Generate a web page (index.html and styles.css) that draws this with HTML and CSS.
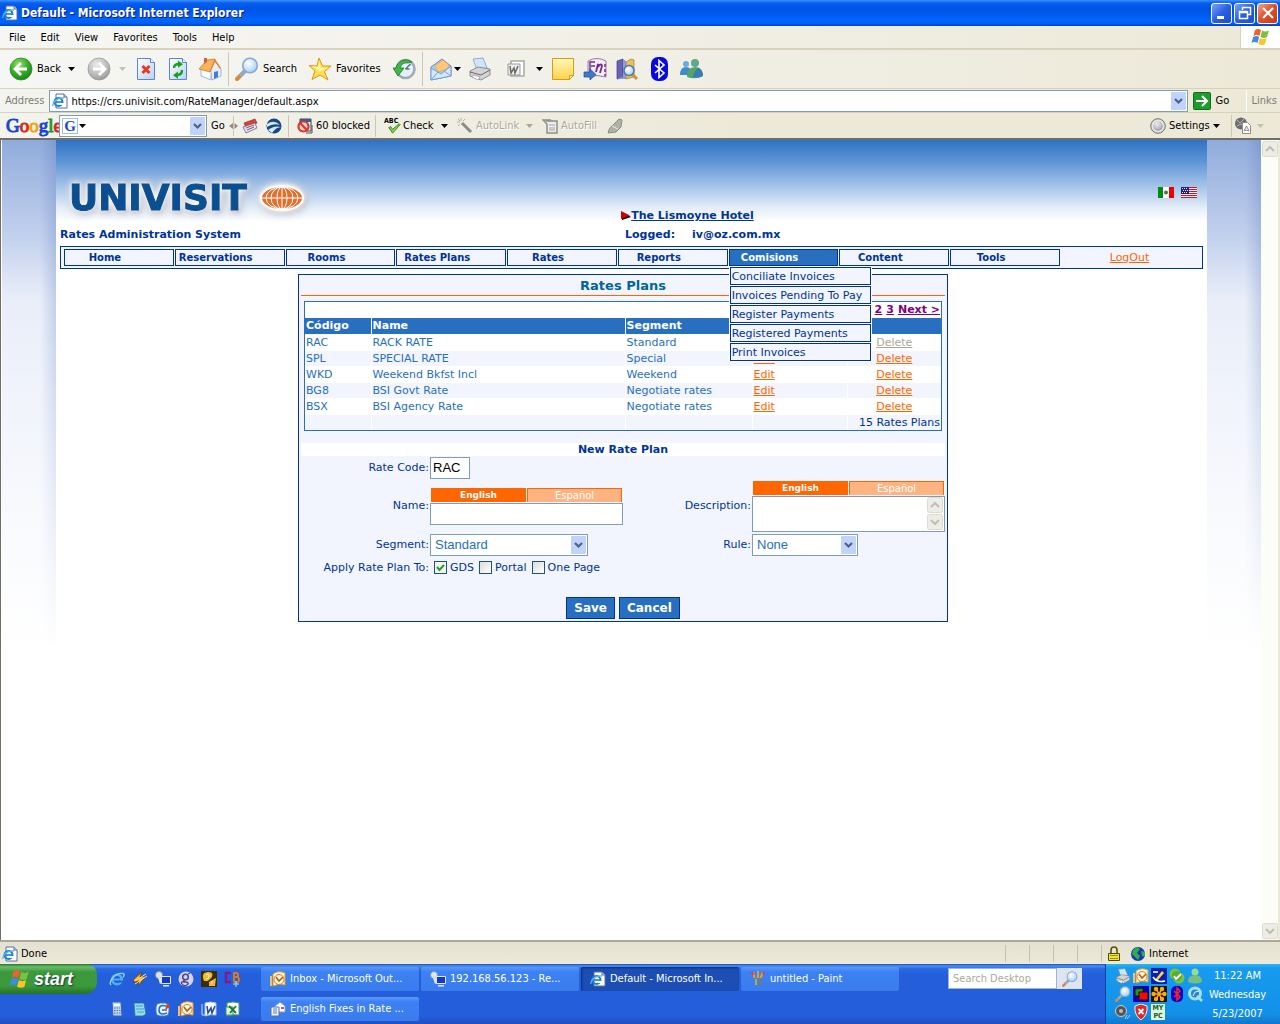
FILE: index.html
```html
<!DOCTYPE html>
<html lang="en">
<head>
<meta charset="utf-8">
<title>Default - Microsoft Internet Explorer</title>
<link rel="stylesheet" href="styles.css">
</head>
<body>
<svg class="defs" width="0" height="0" aria-hidden="true">
  <defs>
    <radialGradient id="gGreen" cx=".4" cy=".3" r=".8"><stop offset="0" stop-color="#9be36b"/><stop offset=".5" stop-color="#38ae27"/><stop offset="1" stop-color="#127a16"/></radialGradient>
    <radialGradient id="gGray" cx=".4" cy=".3" r=".8"><stop offset="0" stop-color="#ececec"/><stop offset=".6" stop-color="#b9b9b9"/><stop offset="1" stop-color="#8e8e8e"/></radialGradient>
    <linearGradient id="gPage" x1="0" y1="0" x2="1" y2="1"><stop offset="0" stop-color="#fff"/><stop offset="1" stop-color="#b9d0fa"/></linearGradient>
    <radialGradient id="gLens" cx=".4" cy=".35" r=".7"><stop offset="0" stop-color="#fff"/><stop offset="1" stop-color="#a5cdf5"/></radialGradient>
    <linearGradient id="gNote" x1="0" y1="0" x2="0" y2="1"><stop offset="0" stop-color="#fff8b8"/><stop offset="1" stop-color="#ffd24a"/></linearGradient>
  </defs>
  <symbol id="ie" viewBox="0 0 16 16"><path d="M4 1h8l3 3v11H4z" fill="#fff" stroke="#5a6f9a"/><path d="M12 1v3h3" fill="#cfdcf5" stroke="#5a6f9a"/><circle cx="6.500" cy="9" r="4" fill="none" stroke="#1c7fd6" stroke-width="2"/><path d="M3 9h7" stroke="#1c7fd6" stroke-width="1.600"/><path d="M8 10h4v2H8z" fill="#fff"/><path d="M1 13C0 9 6 4 12 5" fill="none" stroke="#56b4f0" stroke-width="1.300"/></symbol>
  <symbol id="ieblue" viewBox="0 0 16 16"><circle cx="8" cy="8.500" r="4.800" fill="none" stroke="#4fb0f5" stroke-width="2.600"/><path d="M4 8.500h9" stroke="#4fb0f5" stroke-width="2"/><path d="M10 9.600h5v2h-5z" fill="#245edb"/><path d="M2 14C-1 10 7 1 14 2.500c2 .5 1 2.500 0 4" fill="none" stroke="#8fd3ff" stroke-width="1.300"/></symbol>
  <symbol id="flag" viewBox="0 0 20 18"><path d="M4 2q3-2 6 0L8.500 8q-3-2-6 0z" fill="#f0602a"/><path d="M11 2.500q3 2 7 0L16 9q-3 2-6.500 0z" fill="#7ac143"/><path d="M2.200 9q3-2 6 0L6.500 15q-3-2-6 0z" fill="#3f8be8"/><path d="M9 10q3 2 6.600 0L14 16q-3 2-6.700 0z" fill="#fbc42c"/></symbol>
  <symbol id="back" viewBox="0 0 24 24"><circle cx="12" cy="12" r="11" fill="url(#gGreen)" stroke="#36853a" stroke-width=".8"/><path d="M12 6l-6 6 6 6M7 12h11" fill="none" stroke="#fff" stroke-width="2.800"/></symbol>
  <symbol id="fwd" viewBox="0 0 24 24"><circle cx="12" cy="12" r="11" fill="url(#gGray)" stroke="#9a9a9a" stroke-width=".8"/><path d="M12 6l6 6-6 6M17 12H6" fill="none" stroke="#fff" stroke-width="2.800"/></symbol>
  <symbol id="stop" viewBox="0 0 24 24"><path d="M3.500 1.500h13l4 4v17h-17z" fill="url(#gPage)" stroke="#5b86d8"/><path d="M16.500 1.500v4h4" fill="#fff" stroke="#5b86d8"/><path d="M8.500 9l7 7m0-7l-7 7" stroke="#e8381c" stroke-width="3"/></symbol>
  <symbol id="refresh" viewBox="0 0 24 24"><path d="M3.500 1.500h13l4 4v17h-17z" fill="url(#gPage)" stroke="#5b86d8"/><path d="M16.500 1.500v4h4" fill="#fff" stroke="#5b86d8"/><path d="M8 11q0-4 5-4M16 13q0 5-5 5" fill="none" stroke="#18a018" stroke-width="2.400"/><path d="M12 3.500l5 3.700-5 3.600zM12 14.500l-5 3.700 5 3.500z" fill="#18a018"/></symbol>
  <symbol id="home" viewBox="0 0 24 24"><path d="M12 12l5-8 6 8v7l-9 4z" fill="#e4edfc" stroke="#8fa6d0" stroke-width=".8"/><path d="M3 12l10 2v9l-10-4z" fill="#fafcff" stroke="#8fa6d0" stroke-width=".8"/><path d="M1 12L9 3l8-1-5 13z" fill="#f7b45c" stroke="#cf7a22" stroke-width=".8"/><path d="M17 2l6 9-1 1-5-7-4 9-1 1z" fill="#de8634"/><path d="M16 15l4-1v6l-4 2z" fill="#477bd0"/><path d="M6 1h3v4l-3 2z" fill="#d95d3a"/></symbol>
  <symbol id="search" viewBox="0 0 24 24"><path d="M10 14l-8 8" stroke="#d98a3a" stroke-width="4" stroke-linecap="round"/><path d="M10 14l-5 5" stroke="#7db0e8" stroke-width="3"/><circle cx="15" cy="8.500" r="7.300" fill="url(#gLens)" stroke="#86a9dc" stroke-width="1.600"/></symbol>
  <symbol id="star" viewBox="0 0 24 24"><path d="M11 1l3.500 8H23l-6.500 5.500L20 23l-8-5-8 4.500 3-8.500L1 8.500l8 .5z" fill="#ffdf4d" stroke="#d89a14"/><path d="M11 4l2 7 6 0-6 3-1 1-5-4-3-2 6 1z" fill="#fff3a3"/></symbol>
  <symbol id="history" viewBox="0 0 24 24"><circle cx="13.500" cy="12" r="9" fill="#e6f0fa" stroke="#a1a9b2" stroke-width="2.500"/><path d="M13.500 12l5-5M13.500 12h4" stroke="#54718e" stroke-width="1.500"/><path d="M20 5A10 10 0 004 11H1l5 8 6-8H8q2-6 8-5z" fill="#44b545" stroke="#1b7e22" stroke-width=".8"/></symbol>
  <symbol id="mail" viewBox="0 0 24 24"><path d="M2 10L13 2l9 7v10L2 23z" fill="#a5ccf8" stroke="#8182b8"/><path d="M6 9l8-6 6 5-2 4-9 3z" fill="#ffc878" stroke="#e09b3d" stroke-width=".6"/><path d="M2 11l10 6 10-8v10L2 23z" fill="#cdecff" stroke="#7d9bd5"/><path d="M2 23l7-8m13 4l-7-5" stroke="#7d9bd5"/></symbol>
  <symbol id="print" viewBox="0 0 24 24"><path d="M5 2l10-1 4 10-10 2z" fill="#cfe4ff" stroke="#7f9cc7" stroke-width=".8"/><path d="M2 14l8-4 12 2v6l-9 5-11-4z" fill="#d4d4d4" stroke="#7a7a7a" stroke-width=".8"/><path d="M2 15l11 3 9-5" fill="none" stroke="#6b6b6b"/><path d="M5 18l7 2-2 3-6-3z" fill="#fff" stroke="#888" stroke-width=".6"/></symbol>
  <symbol id="word" viewBox="0 0 24 24"><path d="M7 4h13v15H7z" fill="#fff" stroke="#a8a8a8" stroke-width="1.500"/><path d="M4 7h12v11H4z" fill="#eee" stroke="#999"/><path d="M6 9l1 7 3-5 1 5 3-7" fill="none" stroke="#686868" stroke-width="1.500"/></symbol>
  <symbol id="note" viewBox="0 0 24 24"><path d="M1.500 1.500h21v17l-4 4h-17z" fill="url(#gNote)" stroke="#d99b12"/><path d="M22.500 18.500h-4v4z" fill="#fff4a6" stroke="#d99b12"/></symbol>
  <symbol id="onenote" viewBox="0 0 24 24"><path d="M5 4q9-5 18 0v16q-9-3-18 0z" fill="#f4ecf7" stroke="#9a7aa6"/><path d="M8 5h-1v12M8 5h4M8 9h4M22 7v3M22 12v3M22 17v2" stroke="#722f86" stroke-width="1.500" fill="none"/><path d="M13 15l2-8 .5 2q3-3 3.500 0l-2 7" fill="none" stroke="#722f86" stroke-width="1.800"/><path d="M1 15h6v-3l6 5.500L7 23v-3H1z" fill="#3f77c9" stroke="#25519a" stroke-width=".7"/></symbol>
  <symbol id="research" viewBox="0 0 24 24"><path d="M2 4l6-2v19l-6 1z" fill="#6664b5" stroke="#413e8b" stroke-width=".7"/><path d="M8 2l3 2v18l-9 0 6-2z" fill="#9896dd"/><path d="M11 5l5-3 3 1v17l-8 2z" fill="#e6c25f" stroke="#9e7b27" stroke-width=".7"/><path d="M16 16l6 6" stroke="#d28f35" stroke-width="3"/><circle cx="14" cy="13.500" r="5" fill="url(#gLens)" stroke="#4d75ad" stroke-width="1.500"/></symbol>
  <symbol id="bt" viewBox="0 0 24 24"><rect x="4" y="0" width="17" height="24" rx="7" fill="#0808e0"/><path d="M8 8l9 8-5 4.500v-17L17 8l-9 8" fill="none" stroke="#fff" stroke-width="1.600"/></symbol>
  <symbol id="msn" viewBox="0 0 24 24"><circle cx="7" cy="7" r="3" fill="#67aee0"/><path d="M1 18q0-8 6-8t6 8z" fill="#3d8fc7"/><circle cx="16" cy="6" r="4" fill="#5fa88b"/><path d="M8 20q0-10 8-10t8 9q-8 4-16 1z" fill="#55a468"/><path d="M14 20q1-7 6-9 4 3 4 8-5 3-10 1z" fill="#387eb5"/></symbol>
  <symbol id="go" viewBox="0 0 18 18"><rect x=".5" y=".5" width="17" height="17" rx="1" fill="#1e9b2c" stroke="#116d1b"/><path d="M3 9h10M9 4l5 5-5 5" fill="none" stroke="#fff" stroke-width="2"/></symbol>
  <symbol id="news" viewBox="0 0 16 16"><path d="M2 5l11-4 2 4-11 5z" fill="#e33d31" stroke="#8d3730" stroke-width=".7"/><path d="M1 9l12-4 2 5-11 5z" fill="#d7e5fa" stroke="#5d6b8c" stroke-width=".8"/><path d="M4 10l8-3M5 12l7-3" stroke="#c04a44"/></symbol>
  <symbol id="sphere" viewBox="0 0 16 16"><circle cx="8" cy="8" r="7.500" fill="#18477f"/><path d="M1 6q7-5 13 1Q7 5 1 9zM2 12q6-5 13-3-5 0-9 6z" fill="#cfe9ff"/></symbol>
  <symbol id="blocked" viewBox="0 0 16 16"><path d="M3 1h11v12H3z" fill="#e8eefc" stroke="#345"/><path d="M3 1h11v3H3z" fill="#345f9d"/><path d="M9 15h6v-8" stroke="#555" fill="none"/><circle cx="6.500" cy="8.500" r="5" fill="#f8d7d0" stroke="#e0332a" stroke-width="2.200"/><path d="M3 5l7 7" stroke="#e0332a" stroke-width="2.200"/></symbol>
  <symbol id="check" viewBox="0 0 16 16"><path d="M3 8l4 6L15 5l-1-1-7 6-2-3z" fill="#8cd04b" stroke="#3c7c1c"/></symbol>
  <symbol id="wand" viewBox="0 0 16 16"><path d="M5 5l9 9" stroke="#8c8c84" stroke-width="3"/><path d="M4 0v3M0 4h3M1 1l2 2M8 1L6 3M1 8l2-2" stroke="#b0b0a6"/></symbol>
  <symbol id="fill" viewBox="0 0 16 16"><path d="M4 3h11v12H5V6L1 2h8" fill="#eee" stroke="#8f8f87" stroke-width="1.500"/><path d="M7 7h6M7 10h6M7 12h6" stroke="#a5a59c"/></symbol>
  <symbol id="pen" viewBox="0 0 16 16"><path d="M1 15q1-6 5-8l6-6 3 1-1 7-5 5z" fill="#b1b1a7" stroke="#8e8e85"/><path d="M5 8l6 3" stroke="#eee"/></symbol>
  <symbol id="knob" viewBox="0 0 16 16"><circle cx="8" cy="8" r="7.300" fill="#ddd" stroke="#717171"/><circle cx="8" cy="8" r="5.300" fill="url(#gGray)" stroke="#f4f4f4" stroke-width=".7"/></symbol>
  <symbol id="pdf" viewBox="0 0 18 18"><circle cx="7" cy="6.500" r="6" fill="#6d6d6d"/><path d="M3 3l3 3 4-4M3 9l4-2 3 3" stroke="#b5b5b5" fill="none"/><path d="M8.500 5.500h5l3 3v8h-8z" fill="#fff" stroke="#8f8f8f"/><path d="M10 14l2.500-5 2.500 5q-3-2-5 0" fill="none" stroke="#888"/></symbol>
  <symbol id="lock" viewBox="0 0 14 16"><path d="M4 7V4q0-3 3-3t3 3v3" fill="none" stroke="#5b5606" stroke-width="1.600"/><path d="M1.500 7.500h11v7h-11z" fill="#efe03b" stroke="#4e4a05"/><path d="M3 9.500h8M3 12.500h8" stroke="#9a9112"/></symbol>
  <symbol id="globe" viewBox="0 0 16 16"><circle cx="8" cy="8" r="7" fill="#1835b5"/><path d="M3 4l4-3 3 2-3 4 3 3-2 4-4-4-2-2zM11 5l4 1v5l-3-1z" fill="#2fae4a"/></symbol>
  <symbol id="bolt" viewBox="0 0 16 16"><path d="M2 8l8-7-2 5 6-1L6 15l1-5-6 1z" fill="#ffb52c" stroke="#6b3a00" stroke-width=".8"/><path d="M3 10l11-7M3 13L15 5" stroke="#f5e3bd"/></symbol>
  <symbol id="remote" viewBox="0 0 16 16"><circle cx="4" cy="4" r="3.500" fill="#dce6ea" stroke="#7c8b91" stroke-width=".7"/><path d="M3 7l2 6 2-1-1-5" fill="#dce6ea"/><path d="M6.500 5.500h9v7h-9z" fill="#1438c8" stroke="#dfe6ee"/><path d="M8 14h6v1.500H8z" fill="#dfe6ee"/></symbol>
  <symbol id="gdisk" viewBox="0 0 16 16"><circle cx="8" cy="8" r="7.500" fill="#d6d3ee"/><circle cx="7.500" cy="6" r="2.800" fill="none" stroke="#49458f" stroke-width="1.500"/><path d="M10 3l2-1M7 9q-3 1 1 2t1 3-5-1 3-2" fill="none" stroke="#49458f" stroke-width="1.300"/></symbol>
  <symbol id="qq" viewBox="0 0 16 16"><path d="M0 0h16v16H0z" fill="#3a2b09"/><path d="M2 7Q1 1 7 1t4 5l-4 4H3zM8 11l7-4-1 8H8z" fill="#f8b820"/><path d="M5 4q3-2 3 1T5 8M11 10v3" stroke="#fff" fill="none"/></symbol>
  <symbol id="cube" viewBox="0 0 16 16"><path d="M7 2H2v9h5" fill="none" stroke="#7c1d8a" stroke-width="2.500"/><path d="M10 11V2h3q2 2 0 4h-3 4q2 3 0 5h-4" fill="none" stroke="#d67925" stroke-width="2"/><path d="M12 10v6M9 13h6" stroke="#a8e4ff"/></symbol>
  <symbol id="calc" viewBox="0 0 16 16"><path d="M3 1h9l1 14H4z" fill="#b9d4fb" stroke="#3d62ac"/><path d="M5 3h6v2H5z" fill="#fff"/><path d="M5 7h6M5 9.500h7M5 12h7" stroke="#4d73b7" stroke-dasharray="1.500 1"/></symbol>
  <symbol id="notepad" viewBox="0 0 16 16"><path d="M2 2h10l2 11-3 2H3z" fill="#8fdcf3" stroke="#356d91" stroke-width=".8"/><path d="M4 5h7M4 8h8M5 11h7" stroke="#4e9dc0"/></symbol>
  <symbol id="sync" viewBox="0 0 16 16"><rect x="1" y="2" width="13" height="13" rx="4" fill="#e9f2ff" stroke="#4279c2"/><path d="M11 5Q4 3 4 9t8 3M7 9h5" fill="none" stroke="#2270c9" stroke-width="1.600"/><path d="M12 2l3 4-5 3z" fill="#d64220"/></symbol>
  <symbol id="outlook" viewBox="0 0 16 16"><path d="M3 3q5-4 12-1v12q-6-2-12 1z" fill="#fff1cf" stroke="#e49a33"/><path d="M1 5v10" stroke="#f1bf73" stroke-width="2"/><circle cx="9" cy="8.500" r="5" fill="#fff6df" stroke="#cf8520"/><path d="M6 6l3 4 4-4" fill="none" stroke="#ae5e12" stroke-width="1.500"/></symbol>
  <symbol id="wordc" viewBox="0 0 16 16"><path d="M4 2q5-2 11 0v12q-6-1-11 1z" fill="#fff" stroke="#a9bfe4"/><path d="M1 3v11h3" fill="none" stroke="#cedbf3"/><path d="M6 5l1 7 3-5 1 5 3-7" fill="none" stroke="#1f50a7" stroke-width="1.600"/></symbol>
  <symbol id="excel" viewBox="0 0 16 16"><path d="M3 2q6-2 12 0v12q-6-1-12 1z" fill="#fff" stroke="#42a35b"/><path d="M2 6h7v8H2z" fill="#dff4e3" stroke="#3b9b52"/><path d="M5 5l7 7M12 5l-6 7" stroke="#1a7932" stroke-width="1.800"/></symbol>
  <symbol id="paint" viewBox="0 0 16 16"><path d="M5 8L3 1M8 8V0M10 8l3-7" stroke="#e3a02f" stroke-width="2"/><path d="M3 4L2 1M13 3l1-2" stroke="#e33" stroke-width="2"/><path d="M4 7h8l-1 8H5z" fill="#617f91"/><path d="M6 8v6" stroke="#b9dbe9"/></symbol>
  <symbol id="letter" viewBox="0 0 16 16"><path d="M4 6l6-5 5 4v6H4z" fill="#fff" stroke="#829bc5"/><path d="M1 6h8v9H1z" fill="#f3f6ff" stroke="#58709f"/><path d="M3 8h4M3 10h4M3 12h4" stroke="#597bc0"/><path d="M11 6h3v2h-3z" fill="#d53"/></symbol>
  <symbol id="pencilbox" viewBox="0 0 16 16"><path d="M0 0h16v16H0z" fill="#0820ae"/><path d="M4 12l7-9 2 2-7 8z" fill="#ffd73b"/><path d="M2 9q4 6 12 4M2 4h5" stroke="#fff" fill="none" stroke-width="1.500"/></symbol>
  <symbol id="skype" viewBox="0 0 16 16"><circle cx="6" cy="6" r="5.500" fill="#76c442"/><circle cx="10" cy="10" r="5.500" fill="#76c442"/><circle cx="8" cy="8" r="5" fill="#58ad2b"/><path d="M5 8l2 3 5-5" fill="none" stroke="#fff" stroke-width="1.800"/></symbol>
  <symbol id="buddy" viewBox="0 0 16 16"><circle cx="8" cy="4" r="3.500" fill="#9cda9b"/><path d="M1 14q0-7 7-7t7 7q-7 3-14 0z" fill="#79be81"/></symbol>
  <symbol id="squares" viewBox="0 0 16 16"><path d="M0 0h16v16H0z" fill="#00b"/><path d="M2 3l8-1v8H2z" fill="#1b9a22" stroke="#020"/><path d="M6 6h9v8H6z" fill="#f00a0a" stroke="#400"/></symbol>
  <symbol id="gear" viewBox="0 0 16 16"><path d="M0 0h16v16H0z" fill="#1b1200"/><path d="M3 8h10M5.500 3.700l5 8.600M10.500 3.700l-5 8.600" stroke="#ffa90c" stroke-width="1.600"/><g fill="#ffa90c"><circle cx="2.500" cy="8" r="2.200"/><circle cx="13.500" cy="8" r="2.200"/><circle cx="5" cy="3" r="2.200"/><circle cx="11" cy="3" r="2.200"/><circle cx="5" cy="13" r="2.200"/><circle cx="11" cy="13" r="2.200"/></g></symbol>
  <symbol id="btred" viewBox="0 0 16 16"><rect x="2" width="12" height="16" rx="5" fill="#0505c8"/><path d="M5 5l6 6-3 3V2l3 3-6 6" fill="none" stroke="#f22" stroke-width="1.500"/></symbol>
  <symbol id="qt" viewBox="0 0 16 16"><circle cx="8" cy="7.500" r="5.500" fill="#2a86c4" stroke="#9fe0fb" stroke-width="3"/><path d="M6 10l2-4 4-1" fill="none" stroke="#d9f3ff"/><path d="M10 10l5 5" stroke="#9fe0fb" stroke-width="2.600"/></symbol>
  <symbol id="speaker" viewBox="0 0 16 16"><circle cx="6" cy="7" r="5.500" fill="#555" stroke="#ccc"/><circle cx="6" cy="7" r="2" fill="#bbb"/><path d="M12 11l-2 4M15 11l-3 4" stroke="#b9c9ff"/></symbol>
  <symbol id="shield" viewBox="0 0 16 16"><path d="M8 0l6 2q1 9-6 14Q1 11 2 2z" fill="#d92929" stroke="#eee"/><path d="M5.500 5l5 5m0-5l-5 5" stroke="#fff" stroke-width="1.800"/></symbol>
  <symbol id="tri" viewBox="0 0 7 4"><path d="M0 0h7L3.500 4z" fill="currentColor"/></symbol>
  <symbol id="sbup" viewBox="0 0 16 16"><rect x=".5" y=".5" width="15" height="15" rx="2" fill="#eeede5" stroke="#dddbce"/><path d="M4 10l4-4 4 4" fill="none" stroke="#bfbeb4" stroke-width="2"/></symbol>
  <symbol id="sbdown" viewBox="0 0 16 16"><rect x=".5" y=".5" width="15" height="15" rx="2" fill="#eeede5" stroke="#dddbce"/><path d="M4 6l4 4 4-4" fill="none" stroke="#bfbeb4" stroke-width="2"/></symbol>
  <symbol id="drop" viewBox="0 0 15 18"><rect width="15" height="18" rx="1" fill="#c1d3fb"/><path d="M4 7l3.500 3.500L11 7" fill="none" stroke="#4d6185" stroke-width="2.200"/></symbol>
</svg>

<header class="titlebar">
  <svg class="i16"><use href="#ie"/></svg>
  <h1>Default - Microsoft Internet Explorer</h1>
  <button class="win" aria-label="Minimize"><svg class="i16" viewBox="0 0 16 16"><path d="M3 11h7v3H3z" fill="#fff"/></svg></button>
  <button class="win" aria-label="Restore"><svg class="i16" viewBox="0 0 16 16"><path d="M5.500 5V2.500h8v7H11M2.500 6.500h8v7h-8zM2.500 7.500h8" fill="none" stroke="#fff" stroke-width="1.500"/></svg></button>
  <button class="win close" aria-label="Close"><svg class="i16" viewBox="0 0 16 16"><path d="M3 3l10 10M13 3L3 13" stroke="#fff" stroke-width="2.200"/></svg></button>
</header>

<nav class="menubar" aria-label="Menu">
  <button>File</button><button>Edit</button><button>View</button><button>Favorites</button><button>Tools</button><button>Help</button>
  <span class="brand"><svg width="20" height="18"><use href="#flag"/></svg></span>
</nav>

<div class="toolbar">
  <button class="t-back"><svg class="i24"><use href="#back"/></svg>Back<svg class="tri end"><use href="#tri"/></svg></button>
  <button class="t-fwd" aria-label="Forward"><svg class="i24"><use href="#fwd"/></svg><svg class="tri end"><use href="#tri"/></svg></button>
  <button class="t" aria-label="Stop"><svg class="i24"><use href="#stop"/></svg></button>
  <button class="t" aria-label="Refresh"><svg class="i24"><use href="#refresh"/></svg></button>
  <button class="t" aria-label="Home"><svg class="i24"><use href="#home"/></svg></button>
  <i class="sep"></i>
  <button class="t-search"><svg class="i24"><use href="#search"/></svg>Search</button>
  <button class="t-fav"><svg class="i24"><use href="#star"/></svg>Favorites</button>
  <button class="t" aria-label="History"><svg class="i24"><use href="#history"/></svg></button>
  <i class="sep"></i>
  <button class="t-drop" aria-label="Mail"><svg class="i24"><use href="#mail"/></svg><svg class="tri end"><use href="#tri"/></svg></button>
  <button class="t" aria-label="Print"><svg class="i24"><use href="#print"/></svg></button>
  <button class="t-word" aria-label="Edit with Word"><svg class="i24"><use href="#word"/></svg><svg class="tri end"><use href="#tri"/></svg></button>
  <button class="t" aria-label="Note"><svg class="i24"><use href="#note"/></svg></button>
  <button class="t" aria-label="OneNote"><svg class="i24"><use href="#onenote"/></svg></button>
  <button class="t" aria-label="Research"><svg class="i24"><use href="#research"/></svg></button>
  <button class="t" aria-label="Bluetooth"><svg class="i24"><use href="#bt"/></svg></button>
  <button class="t" aria-label="Messenger"><svg class="i24"><use href="#msn"/></svg></button>
</div>

<form class="addressbar">
  <label for="addr">Address</label>
  <span class="field"><svg class="i16"><use href="#ie"/></svg><input id="addr" type="text" value="https://crs.univisit.com/RateManager/default.aspx"><svg width="15" height="18"><use href="#drop"/></svg></span>
  <button type="button" class="gobtn"><svg width="18" height="18"><use href="#go"/></svg>Go</button>
  <span class="links">Links</span>
</form>

<div class="googlebar">
  <span class="glogo"><span class="c1">G</span><span class="c2">o</span><span class="c3">o</span><span class="c1">g</span><span class="c4">l</span><span class="c2">e</span></span>
  <span class="gbox"><span class="gg">G</span><svg class="tri"><use href="#tri"/></svg><input type="text" aria-label="Google search"><svg width="15" height="18"><use href="#drop"/></svg></span>
  <button class="g-go">Go</button>
  <svg class="grip" width="9" height="20" viewBox="0 0 9 20"><path d="M4.500 0v20" stroke="#cbc7b3"/><path d="M4 7v6L0 10zM5.500 7v6l3.500-3z" fill="#8e8c80"/></svg>
  <button class="g-ico" aria-label="News"><svg class="i16"><use href="#news"/></svg></button>
  <button class="g-ico" aria-label="Earth"><svg class="i16"><use href="#sphere"/></svg></button>
  <i class="sep"></i>
  <button class="g-block"><svg class="i16"><use href="#blocked"/></svg>60 blocked</button>
  <i class="sep"></i>
  <button class="g-check"><svg width="18" height="18" viewBox="0 0 18 18"><text x="0" y="6" class="abc">ABC</text><use href="#check" x="2" y="3" width="15" height="15"/></svg>Check<svg class="tri end"><use href="#tri"/></svg></button>
  <button class="g-link off"><svg class="i16"><use href="#wand"/></svg>AutoLink<svg class="tri end"><use href="#tri"/></svg></button>
  <button class="g-fill off"><svg class="i16"><use href="#fill"/></svg>AutoFill</button>
  <button class="g-ico" aria-label="Highlight"><svg class="i16"><use href="#pen"/></svg></button>
  <button class="g-set"><svg class="i16"><use href="#knob"/></svg>Settings<svg class="tri"><use href="#tri"/></svg></button>
  <i class="sep"></i>
  <button class="g-pdf" aria-label="Convert to PDF"><svg width="18" height="18"><use href="#pdf"/></svg><svg class="tri end"><use href="#tri"/></svg></button>
</div>

<div class="view">
  <div class="strip"></div>
  <main class="page">
    <div class="banner">
      <div class="logo">UNIVISIT<svg width="44" height="26" viewBox="0 0 44 26"><ellipse cx="22" cy="13" rx="22" ry="13" fill="#fff"/><ellipse cx="22" cy="13" rx="20" ry="11" fill="#e2702c"/><g fill="none" stroke="#fff"><ellipse cx="22" cy="13" rx="16" ry="11"/><ellipse cx="22" cy="13" rx="11" ry="11"/><ellipse cx="22" cy="13" rx="5" ry="11"/><path d="M22 2v22M2 13h40"/></g></svg></div>
      <div class="flags">
        <svg width="16" height="11" viewBox="0 0 16 11"><path d="M0 0h16v11H0z" fill="#fff"/><path d="M0 0h5v11H0z" fill="#008c0c"/><path d="M11 0h5v11h-5z" fill="#f00000"/><circle cx="8" cy="5.500" r="2" fill="#4f7350"/></svg>
        <svg width="16" height="11" viewBox="0 0 16 11"><path d="M0 0h16v11H0z" fill="#fff"/><path d="M0 .5h16M0 2.500h16M0 4.500h16M0 6.500h16M0 8.500h16M0 10.500h16" stroke="#e01020"/><path d="M0 0h8v7H0z" fill="#1818a0"/><path d="M1 1.500h6M2 3.500h6M1 5.500h6" stroke="#fff" stroke-dasharray="1 1"/></svg>
      </div>
    </div>
    <div class="hotel"><svg width="10" height="10" viewBox="0 0 10 10"><path d="M1 1l9 5-9 3z" fill="#000"/><path d="M0 0l9 4.500L0 8z" fill="#d00000"/></svg><a href="#">The Lismoyne Hotel</a></div>
    <div class="who"><strong>Rates Administration System</strong><span>Logged:</span><span>iv@oz.com.mx</span></div>
    <nav class="tabs" aria-label="Sections">
      <div class="tablist">
        <a href="#">Home</a><a href="#">Reservations</a><a href="#">Rooms</a><a href="#">Rates Plans</a><a href="#">Rates</a><a href="#">Reports</a>
        <div class="open"><a href="#">Comisions</a>
          <div class="sub"><a href="#">Conciliate Invoices</a><a href="#">Invoices Pending To Pay</a><a href="#">Register Payments</a><a href="#">Registered Payments</a><a href="#">Print Invoices</a></div>
        </div>
        <a href="#">Content</a><a href="#">Tools</a>
      </div>
      <span class="out"><a href="#">LogOut</a></span>
    </nav>

    <div class="stage">
    <section class="panel">
      <h2>Rates Plans</h2>
      <div class="gridwrap">
        <div class="pager"><a href="#">2</a><a href="#">3</a><a href="#">Next &gt;</a></div>
        <table>
          <colgroup><col class="c-code"><col class="c-name"><col class="c-seg"><col class="c-edit"><col></colgroup>
          <thead><tr><th>Código</th><th>Name</th><th>Segment</th><th></th><th></th></tr></thead>
          <tbody>
            <tr><td>RAC</td><td>RACK RATE</td><td>Standard</td><td></td><td class="del"><a class="dis" href="#">Delete</a></td></tr>
            <tr><td>SPL</td><td>SPECIAL RATE</td><td>Special</td><td><a href="#">Edit</a></td><td class="del"><a href="#">Delete</a></td></tr>
            <tr><td>WKD</td><td>Weekend Bkfst Incl</td><td>Weekend</td><td><a href="#">Edit</a></td><td class="del"><a href="#">Delete</a></td></tr>
            <tr><td>BG8</td><td>BSI Govt Rate</td><td>Negotiate rates</td><td><a href="#">Edit</a></td><td class="del"><a href="#">Delete</a></td></tr>
            <tr><td>BSX</td><td>BSI Agency Rate</td><td>Negotiate rates</td><td><a href="#">Edit</a></td><td class="del"><a href="#">Delete</a></td></tr>
            <tr class="foot"><td></td><td></td><td></td><td></td><td class="total">15 Rates Plans</td></tr>
          </tbody>
        </table>
      </div>
      <h3>New Rate Plan</h3>
      <form class="plan">
        <label class="lab" for="code">Rate Code:</label>
        <input id="code" class="box code" type="text" value="RAC">
        <label class="lab row2" for="name">Name:</label>
        <div class="lang row2">
          <div class="langtabs"><button type="button" class="on">English</button><button type="button">Español</button></div>
          <input id="name" class="box" type="text">
        </div>
        <label class="lab row2" for="desc">Description:</label>
        <div class="lang row2">
          <div class="langtabs"><button type="button" class="on">English</button><button type="button">Español</button></div>
          <div class="area box"><textarea id="desc"></textarea><span><svg class="i16"><use href="#sbup"/></svg><svg class="i16"><use href="#sbdown"/></svg></span></div>
        </div>
        <label class="lab" for="seg">Segment:</label>
        <select id="seg" class="box seg"><option>Standard</option></select>
        <label class="lab" for="rule">Rule:</label>
        <select id="rule" class="box rule"><option>None</option></select>
        <span class="lab">Apply Rate Plan To:</span>
        <div class="checks">
          <label><input type="checkbox" checked>GDS</label><label><input type="checkbox">Portal</label><label><input type="checkbox">One Page</label>
        </div>
        <div class="actions"><button type="button">Save</button><button type="button">Cancel</button></div>
      </form>
    </section>
    </div>
  </main>
  <div class="strip"></div>
  <div class="scroll"><svg class="i16"><use href="#sbup"/></svg><svg class="i16"><use href="#sbdown"/></svg></div>
</div>

<div class="status">
  <svg class="i16"><use href="#ie"/></svg><span class="done">Done</span>
  <i></i><i></i><i></i><i></i><i></i>
  <span class="lock"><svg width="14" height="16"><use href="#lock"/></svg></span>
  <span class="zone"><svg class="i16"><use href="#globe"/></svg>Internet</span>
</div>

<footer class="taskbar">
  <button class="start"><svg width="22" height="20"><use href="#flag"/></svg>start</button>
  <div class="quick">
    <svg class="i16"><use href="#ieblue"/></svg><svg class="i16"><use href="#bolt"/></svg><svg class="i16"><use href="#remote"/></svg><svg class="i16"><use href="#gdisk"/></svg><svg class="i16"><use href="#qq"/></svg><svg class="i16"><use href="#cube"/></svg>
    <svg class="i16"><use href="#calc"/></svg><svg class="i16"><use href="#notepad"/></svg><svg class="i16"><use href="#sync"/></svg><svg class="i16"><use href="#outlook"/></svg><svg class="i16"><use href="#wordc"/></svg><svg class="i16"><use href="#excel"/></svg>
  </div>
  <div class="tasks">
    <button><svg class="i16"><use href="#outlook"/></svg>Inbox - Microsoft Out...</button>
    <button><svg class="i16"><use href="#remote"/></svg>192.168.56.123 - Re...</button>
    <button class="cur"><svg class="i16"><use href="#ie"/></svg>Default - Microsoft In...</button>
    <button><svg class="i16"><use href="#paint"/></svg>untitled - Paint</button>
    <button><svg class="i16"><use href="#letter"/></svg>English Fixes in Rate ...</button>
  </div>
  <div class="desk"><input type="text" placeholder="Search Desktop" aria-label="Search Desktop"><button aria-label="Search"><svg class="i16"><use href="#search"/></svg></button></div>
  <div class="tray">
    <div class="trayicons">
      <svg class="i16"><use href="#print"/></svg><svg class="i16"><use href="#outlook"/></svg><svg class="i16"><use href="#pencilbox"/></svg><svg class="i16"><use href="#skype"/></svg><svg class="i16"><use href="#buddy"/></svg>
      <svg class="i16"><use href="#search"/></svg><svg class="i16"><use href="#squares"/></svg><svg class="i16"><use href="#gear"/></svg><svg class="i16"><use href="#btred"/></svg><svg class="i16"><use href="#qt"/></svg>
      <svg class="i16"><use href="#speaker"/></svg><svg class="i16"><use href="#shield"/></svg><span class="mypc">MY<br>PC</span>
    </div>
    <div class="clock"><span>11:22 AM</span><span>Wednesday</span><span>5/23/2007</span></div>
  </div>
</footer>
</body>
</html>
```
FILE: styles.css
```css
* { box-sizing: border-box; }
body {
  margin: 0;
  min-height: 100vh;
  display: flex;
  flex-direction: column;
  background: #ece9d8;
  color: #000;
  font: 11px/14px "DejaVu Sans Condensed", "Noto Sans", sans-serif;
}
button, input, select, textarea { font: inherit; color: inherit; margin: 0; }
button { border: 0; padding: 0; background: none; white-space: nowrap; }
input, textarea { border: 0; padding: 0; background: #fff; outline: 0; min-width: 0; }
svg { display: block; flex: none; }
.defs { position: absolute; }
.i16 { width: 16px; height: 16px; }
.i24 { width: 24px; height: 24px; }
.tri { width: 7px; height: 4px; }
.end { margin-left: auto; }

/* window chrome */
.titlebar {
  height: 26px;
  display: flex;
  align-items: center;
  gap: 2px;
  padding: 0 2px;
  background: linear-gradient(#3a93ff 0, #0a5ef0 3px, #0054e3 8px, #0058ee 14px, #0066ff 20px, #0062f8 23px, #0042c8 26px);
}
.titlebar h1 {
  flex: 1;
  margin: 0;
  padding-left: 1px;
  color: #fff;
  font: bold 12px/16px "DejaVu Sans Condensed", sans-serif;
  text-shadow: 1px 1px #0a1883;
}
.win {
  width: 21px;
  height: 21px;
  display: grid;
  place-items: center;
  border: 1px solid #fff;
  border-radius: 3px;
  background: linear-gradient(135deg, #7ba2f7, #2a5fe4 50%, #1c4fd0);
}
.win.close { background: linear-gradient(135deg, #f0a48c, #e04d27 50%, #c03c18); }

.menubar {
  height: 24px;
  display: flex;
  align-items: stretch;
  padding-left: 9px;
  gap: 15px;
  border-bottom: 2px solid #d8d2bd;
  background: linear-gradient(90deg, #f6f6f4, #ece9d8);
}
.menubar button { padding-top: 2px; }
.brand {
  width: 40px;
  margin-left: auto;
  display: grid;
  place-items: center;
  border-left: 1px solid #d8d2bd;
  background: #fff;
}

.toolbar {
  height: 39px;
  display: flex;
  align-items: center;
  padding-left: 5px;
  border-bottom: 1px solid #d8d2bd;
  background: linear-gradient(90deg, #f6f6f4, #ece9d8);
}
.toolbar button { height: 32px; display: flex; align-items: center; gap: 4px; padding: 0 4px; }
.toolbar .t-back { width: 78px; }
.toolbar .t-back .end { margin-right: 4px; }
.toolbar .t-fwd { width: 47px; color: #c4c1b4; }
.toolbar .t { width: 32px; }
.toolbar .t-search { width: 73px; }
.toolbar .t-fav { width: 84px; }
.toolbar .t-drop { width: 39px; gap: 1px; }
.toolbar .t-word { width: 51px; padding-left: 8px; }
.sep { width: 1px; height: 34px; margin: 0 2px; background: #cbc7b3; flex: none; }

.addressbar {
  height: 24px;
  display: flex;
  align-items: center;
  padding-left: 5px;
  gap: 5px;
  border-bottom: 1px solid #d8d2bd;
  background: linear-gradient(90deg, #f3f3ef, #ece9d8);
}
.addressbar label, .links { color: #7f7c73; }
.field {
  flex: 1;
  height: 22px;
  display: flex;
  align-items: center;
  gap: 3px;
  padding: 0 1px 0 2px;
  border: 1px solid #7f9db9;
  background: #fff;
}
.field input { flex: 1; height: 18px; padding-top: 2px; }
.gobtn { width: 48px; display: flex; align-items: center; gap: 5px; }
.links { height: 22px; line-height: 22px; padding: 0 3px 0 5px; border-left: 1px solid #fff; }

.googlebar {
  height: 27px;
  display: flex;
  align-items: center;
  padding-left: 6px;
  border-bottom: 2px solid #716f64;
  background: linear-gradient(90deg, #f3f3ef, #ece9d8 60%);
}
.googlebar .sep { height: 22px; }
.googlebar button { display: flex; align-items: center; gap: 3px; height: 20px; }
.glogo { width: 53px; font: 19px/22px "Liberation Serif", serif; -webkit-text-stroke: 1px; }
.c1 { color: #1846d0; } .c2 { color: #d8281a; } .c3 { color: #e8a80c; } .c4 { color: #1a9a28; }
.gbox {
  width: 148px;
  height: 22px;
  display: flex;
  align-items: center;
  gap: 1px;
  padding: 0 1px 0 2px;
  border: 1px solid #7f9db9;
  background: #fff;
}
.gbox input { flex: 1; width: 20px; }
.gg {
  width: 16px;
  height: 16px;
  border: 1px solid #9cc4e4;
  color: #1846d0;
  font: bold 15px/14px "Liberation Serif", serif;
  text-align: center;
}
.googlebar .g-go { padding-left: 4px; width: 22px; }
.googlebar .g-ico { width: 24px; padding-left: 4px; }
.googlebar .g-block { padding-left: 6px; width: 82px; }
.googlebar .g-check { padding-left: 6px; width: 70px; gap: 1px; }
.googlebar .g-link { padding-left: 9px; width: 85px; }
.googlebar .g-fill { padding-left: 9px; width: 70px; }
.googlebar .g-set { margin-left: auto; width: 79px; }
.googlebar .g-pdf { width: 34px; margin-right: 12px; color: #c4c1b4; }
.googlebar .g-pdf .end { margin-right: 4px; }
.off { color: #aca899; text-shadow: 1px 1px #fff; }
.abc { font: bold 7px "DejaVu Sans Condensed", sans-serif; }

/* browser viewport */
.view {
  flex: 1;
  display: flex;
  padding-left: 1px;
  border-left: 1px solid #716f64;
  border-right: 2px solid #ece9d8;
  background: #fff;
}
.strip {
  flex: 0 0 54px;
  background:
    linear-gradient(transparent, #fff 510px),
    linear-gradient(90deg, #fff0 38px, #6d8cc880 54px),
    linear-gradient(#8fabdc 0, #a5bbe3 60px, #b6c7ea 100px, #dfe6f6 160px, #e9eefa 510px);
}
.scroll {
  flex: 0 0 17px;
  display: flex;
  flex-direction: column;
  justify-content: space-between;
  padding: 1px 0 1px 1px;
  background: #fdfdf8;
}
.page {
  flex: 1;
  padding: 0 4px;
  background: linear-gradient(#2f72c4 0, #5a92d4 20px, #a3c3e8 46px, #e4eef8 68px, #fff 82px);
  color: #039;
  font: 11px/14px "DejaVu Sans", sans-serif;
}
.page a { color: inherit; }
.banner { height: 69px; padding: 42px 5px 0 9px; display: flex; justify-content: space-between; }
.logo {
  display: flex;
  align-items: center;
  gap: 13px;
  height: 32px;
  color: #0b4f91;
  font: 900 36px/32px "DejaVu Sans", sans-serif;
  -webkit-text-stroke: 1px #0b4f91;
  filter: drop-shadow(0 0 2px #fff) drop-shadow(0 0 4px #fff) drop-shadow(1px 1px 1px #99a);
}
.flags { display: flex; gap: 7px; padding: 5px 1px 0 0; }
.hotel { display: flex; align-items: center; justify-content: center; height: 14px; padding-left: 112px; font-weight: bold; }
.who { display: flex; height: 23px; align-items: center; font-weight: bold; }
.who strong { flex: 0 0 565px; }
.who span { flex: 0 0 67px; }

.tabs {
  display: flex;
  padding: 2px 3px;
  border: 1px solid #039;
  background: #f2f5fd;
}
.tablist {
  flex: 0 1 996px;
  display: grid;
  grid-template-columns: repeat(9, 1fr);
  gap: 1px;
}
.tablist > a, .open > a {
  height: 17px;
  padding-right: 28px;
  border: 1px solid #039;
  font: bold 10px/15px "DejaVu Sans", sans-serif;
  text-align: center;
  text-decoration: none;
}
.open { position: relative; display: grid; }
.open > a { color: #fff; background: #286fc0; }
.sub {
  position: absolute;
  top: 17px;
  left: 0;
  z-index: 2;
  width: 143px;
  padding: 1px;
  display: grid;
  gap: 1px;
  background: #fff;
}
.sub a {
  height: 18px;
  padding-left: 1px;
  border: 1px solid #039;
  background: #f2f5fd;
  line-height: 17px;
  text-decoration: none;
  white-space: nowrap;
}
.out { flex: 1; text-align: center; line-height: 17px; color: #f60; }

/* rates plans panel */
.stage { padding: 5px 17px 0 0; }
.panel {
  width: 650px;
  max-width: 100%;
  margin: 0 auto;
  padding: 2px;
  border: 1px solid #039;
  background: #f2f5fd;
}
.panel h2 {
  margin: 0 0 5px;
  height: 19px;
  border-bottom: 1px solid #f60;
  color: #069;
  font: bold 13px/17px "DejaVu Sans", sans-serif;
  text-align: center;
}
.gridwrap { margin: 0 3px 12px; border: 1px solid #286fc0; background: #fff; color: #286fc0; }
.pager {
  height: 16px;
  display: flex;
  justify-content: flex-end;
  gap: 4px;
  padding-right: 1px;
  color: #800080;
  font-weight: bold;
  line-height: 16px;
}
.gridwrap table { width: 100%; table-layout: fixed; border-collapse: collapse; }
.c-code { width: 66px; } .c-name { width: 254px; } .c-seg { width: 127px; } .c-edit { width: 95px; }
.gridwrap th, .gridwrap td {
  height: 16px;
  padding: 0 1px;
  border-right: 1px solid #fff;
  border-bottom: 1px solid #fff;
  line-height: 15px;
  text-align: left;
  white-space: nowrap;
}
.gridwrap th { color: #fff; background: #286fc0; }
.gridwrap th:last-child, .gridwrap td:last-child { border-right: 0; }
.gridwrap tr:nth-child(even) td { background: #f2f5fd; }
.gridwrap .foot td { height: 15px; border-bottom: 0; }
.gridwrap td a { color: #f60; }
.gridwrap td a.dis { color: #aca899; }
.gridwrap .del { text-align: center; }
.gridwrap .total { color: #039; text-align: right; }
.panel h3 { margin: 0 0 1px; background: #fff; font: bold 11px/13px "DejaVu Sans", sans-serif; text-align: center; }

.plan {
  display: grid;
  grid-template-columns: 129px 1fr 129px 1fr;
  grid-template-rows: 22px 53px 22px 22px auto;
  row-gap: 1px;
  align-items: center;
}
.lab { text-align: right; padding-right: 1px; }
.box { border: 1px solid #7f9db9; background: #fff; }
.code { grid-column: 2 / -1; justify-self: start; width: 40px; height: 22px; padding-left: 2px; color: #000; font: 13px/16px "Liberation Sans", sans-serif; }
.row2 { grid-row: 2; }
.lang { display: grid; gap: 1px; }
.lang input { width: 100%; height: 22px; }
.langtabs { display: grid; grid-template-columns: 1fr 1fr; gap: 1px; padding: 0 1px; }
.langtabs button {
  height: 14px;
  border: 1px solid #f60;
  border-bottom: 0;
  background: #ffb380;
  color: #fff;
  font: 10px/13px "DejaVu Sans", sans-serif;
}
.langtabs .on { background: #f60; font-weight: bold; font-size: 9px; }
.area { display: flex; height: 36px; }
.area textarea { flex: 1; resize: none; }
.area span { width: 17px; display: grid; }
select.box {
  appearance: none;
  justify-self: start;
  height: 22px;
  padding: 0 4px;
  border-radius: 0;
  color: #286fc0;
  font: 13px/18px "Liberation Sans", sans-serif;
  background: #fff url("data:image/svg+xml,%3Csvg xmlns='http://www.w3.org/2000/svg' width='15' height='18'%3E%3Crect width='15' height='18' rx='1' fill='%23c1d3fb'/%3E%3Cpath d='M4 7l3.500 3.500L11 7' fill='none' stroke='%234d6185' stroke-width='2.200'/%3E%3C/svg%3E") no-repeat right 1px center;
}
.seg { width: 158px; }
.rule { width: 106px; }
.checks { grid-column: 2 / -1; display: flex; gap: 5px; padding-left: 4px; }
.checks label { display: flex; align-items: center; gap: 3px; }
.checks input {
  appearance: none;
  width: 13px;
  height: 13px;
  border: 1px solid #1c5180;
  background: linear-gradient(135deg, #dcdcd7, #fff);
}
.checks input:checked {
  background: #f4f4f2 url("data:image/svg+xml,%3Csvg xmlns='http://www.w3.org/2000/svg' width='11' height='11'%3E%3Cpath d='M2 5l2.500 3L9 3' fill='none' stroke='%2321a121' stroke-width='2'/%3E%3C/svg%3E") center no-repeat;
}
.actions { grid-column: 1 / -1; display: flex; justify-content: center; gap: 4px; padding-top: 17px; }
.actions button {
  height: 22px;
  padding: 0 7px;
  border: 1px solid #039;
  background: #286fc0;
  color: #fff;
  font: bold 12px/18px "DejaVu Sans", sans-serif;
}

/* status bar */
.status {
  height: 24px;
  display: flex;
  align-items: center;
  gap: 3px;
  padding: 1px 0 0 2px;
  border-top: 2px solid #aca899;
  background: linear-gradient(#e4e1d0, #ece9d8);
}
.done { flex: 1; }
.status i { flex: 0 0 21px; height: 17px; border-left: 1px solid #c6c2ae; }
.status .lock { width: 20px; margin-left: -18px; }
.zone { width: 150px; display: flex; gap: 3px; align-items: center; }

/* taskbar */
.taskbar {
  height: 60px;
  display: flex;
  align-items: flex-start;
  color: #fff;
  background: linear-gradient(#1f4fb8 0, #4590f5 2px, #2a66e0 5px, #245edb 12px, #245edb 52px, #1f50c0 60px);
}
.start {
  flex: 0 0 97px;
  height: 30px;
  display: flex;
  align-items: center;
  gap: 3px;
  padding-left: 9px;
  border-radius: 0 10px 12px 0;
  background: linear-gradient(#2c7a2c 0, #6abd6a 3px, #3c983c 8px, #3b9a3b 22px, #276f27 30px);
  font: italic bold 18px/24px "Liberation Sans", sans-serif;
  text-shadow: 1px 1px 2px #133;
}
.quick {
  flex: 0 0 131px;
  margin-left: 12px;
  padding-top: 7px;
  display: grid;
  grid-template-columns: repeat(6, 16px);
  gap: 14px 7px;
}
.tasks {
  flex: 0 1 642px;
  margin-left: 21px;
  padding-top: 3px;
  display: flex;
  flex-wrap: wrap;
  gap: 6px 2px;
}
.tasks button {
  flex: 0 0 158px;
  height: 24px;
  display: flex;
  align-items: center;
  gap: 4px;
  padding-left: 9px;
  border-radius: 2px;
  background: linear-gradient(#5b98fa, #3c81f3 5px, #3a7cee);
}
.tasks .cur { background: #1c4eb4; box-shadow: inset 1px 1px 2px #0a2c78; }
.desk { flex: 0 0 134px; min-width: 0; display: flex; height: 21px; margin: 4px 23px 0 auto; }
.desk input { flex: 1; width: 80px; padding-left: 4px; border: 1px solid #9db4d8; }
.desk input::placeholder { color: #aca899; opacity: 1; }
.desk button { width: 25px; display: grid; place-items: center; background: #dfe5f0; }
.tray {
  flex: 0 0 175px;
  align-self: stretch;
  display: flex;
  padding: 4px 8px 0 9px;
  border-left: 1px solid #0a3f9e;
  background: linear-gradient(#2bb5f6 0, #189bee 4px, #1290e8 50px, #0f77cc 60px);
}
.trayicons { display: grid; grid-template-columns: repeat(5, 16px); gap: 2px; align-content: start; }
.mypc { width: 14px; height: 16px; background: #dff5df; color: #106010; font: bold 7px/8px "DejaVu Sans Condensed", sans-serif; text-align: center; }
.clock { flex: 1; display: grid; grid-auto-rows: 19px; align-content: start; padding-top: 1px; text-align: center; }
```
